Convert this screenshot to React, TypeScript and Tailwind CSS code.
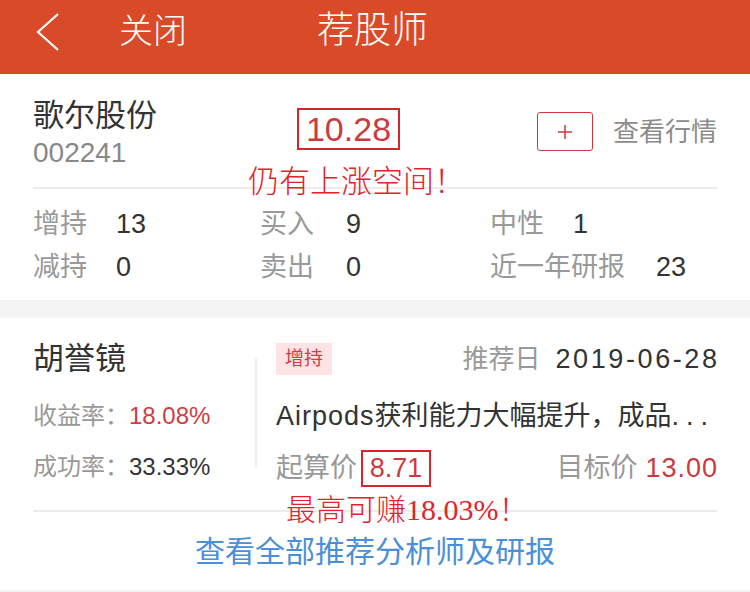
import React from "react";

const SANS = "font-['Liberation_Sans','Noto_Sans_CJK_SC',sans-serif]";

export default function App() {
  return (
    <div className={`w-[750px] h-[592px] bg-[#f4f4f4] overflow-hidden relative ${SANS}`}>
      {/* Header */}
      <div className="h-[74px] bg-[#d94b28] flex items-start text-white">
        <svg className="ml-[34px] mt-[12px]" width="28" height="40" viewBox="0 0 28 40">
          <polyline points="24,2 4,20 24,38" fill="none" stroke="white" strokeWidth="2.2" />
        </svg>
        <div className="ml-[57px] mt-[10px] text-[34px] leading-[42px] font-light">关闭</div>
        <div className="ml-[130px] mt-[9px] text-[37px] leading-[44px] font-light">荐股师</div>
      </div>

      {/* Section 1 */}
      <div className="h-[226px] bg-white px-[33px] relative">
        <div className="h-[113px] flex items-start">
          <div className="w-[264px] pt-[22px]">
            <div className="text-[31px] leading-[40px] text-[#333]">歌尔股份</div>
            <div className="text-[28px] leading-[32px] text-[#888] mt-[1px]">002241</div>
          </div>
          <div className="mt-[34px] h-[42px] w-[103px] border-2 border-[#d5262e] flex items-center justify-center text-[34px] text-[#cc3a40]">
            10.28
          </div>
          <div className="ml-auto mt-[38px] flex items-center">
            <div className="w-[56px] h-[39px] border-[1.5px] border-[#cc3a40] rounded-[3px] flex items-center justify-center">
              <svg width="16" height="16" viewBox="0 0 16 16">
                <path d="M8 1v14M1 8h14" stroke="#cc3a40" strokeWidth="1.5" />
              </svg>
            </div>
            <div className="ml-[20px] text-[26px] leading-[30px] text-[#8c8c8c]">查看行情</div>
          </div>
        </div>
        <div className="border-t-2 border-[#ececec]" />
        <div className="pt-[14px] grid grid-cols-[227px_230px_1fr] text-[27px] leading-[43px]">
          <div className="flex gap-[29px]"><span className="text-[#999]">增持</span><span className="text-[#333]">13</span></div>
          <div className="flex gap-[32px]"><span className="text-[#999]">买入</span><span className="text-[#333]">9</span></div>
          <div className="flex gap-[29px]"><span className="text-[#999]">中性</span><span className="text-[#333]">1</span></div>
          <div className="flex gap-[29px]"><span className="text-[#999]">减持</span><span className="text-[#333]">0</span></div>
          <div className="flex gap-[32px]"><span className="text-[#999]">卖出</span><span className="text-[#333]">0</span></div>
          <div className="flex gap-[31px]"><span className="text-[#999]">近一年研报</span><span className="text-[#333]">23</span></div>
        </div>
        <div className="absolute left-[248px] top-[88px] text-[31px] leading-[40px] text-[#e0242c] font-['Liberation_Serif','Noto_Sans_CJK_SC',serif] font-light whitespace-nowrap">
          仍有上涨空间！
        </div>
      </div>

      {/* Section 2 */}
      <div className="mt-[18px] h-[272px] bg-white px-[33px] relative">
        <div className="flex pt-[23px] h-[192px]">
          <div className="w-[222px]">
            <div className="h-[36px] text-[31px] leading-[36px] text-[#333]">胡誉镜</div>
            <div className="mt-[21px] h-[36px] leading-[36px] text-[24px]">
              <span className="text-[#999]">收益率：</span>
              <span className="text-[#cf3c42]">18.08%</span>
            </div>
            <div className="mt-[15px] h-[36px] leading-[36px] text-[24px]">
              <span className="text-[#999]">成功率：</span>
              <span className="text-[#333]">33.33%</span>
            </div>
          </div>
          <div className="w-[2px] bg-[#f0f0f0] mt-[17px] h-[110px]" />
          <div className="flex-1 pl-[19px]">
            <div className="h-[36px] flex items-center">
              <div className="h-[32px] px-[9px] bg-[#fde3e4] text-[#d23c44] text-[19px] leading-[32px]">增持</div>
              <div className="ml-auto text-[26px] leading-[36px] whitespace-nowrap">
                <span className="text-[#999]">推荐日</span>
                <span className="ml-[15px] text-[#333] text-[27px] tracking-[2.6px] mr-[-2.6px]">2019-06-28</span>
              </div>
            </div>
            <div className="mt-[21px] h-[36px] leading-[36px] text-[27px] text-[#333] whitespace-nowrap">
              <span className="tracking-[1px]">Airpods</span>获利能力大幅提升，成品<span className="tracking-[7px]">...</span>
            </div>
            <div className="mt-[15px] h-[38px] flex items-center text-[27px]">
              <span className="text-[#999]">起算价</span>
              <div className="ml-[4px] h-[37px] w-[70px] border-2 border-[#d5262e] flex items-center justify-center text-[#cc3a40]">8.71</div>
              <div className="ml-auto whitespace-nowrap">
                <span className="text-[#999]">目标价</span>
                <span className="ml-[8px] text-[#cc3a40] tracking-[1px] mr-[-1px]">13.00</span>
              </div>
            </div>
          </div>
        </div>
        <div className="border-t-2 border-[#ececec]" />
        <div className="pt-[20px] text-center text-[30px] leading-[40px] text-[#4a8fd8]">查看全部推荐分析师及研报</div>
        <div className="absolute left-[286px] top-[172px] text-[30px] leading-[40px] text-[#e0242c] font-['Liberation_Serif','Noto_Sans_CJK_SC',serif] font-light whitespace-nowrap">
          最高可赚18.03%！
        </div>
      </div>
    </div>
  );
}
